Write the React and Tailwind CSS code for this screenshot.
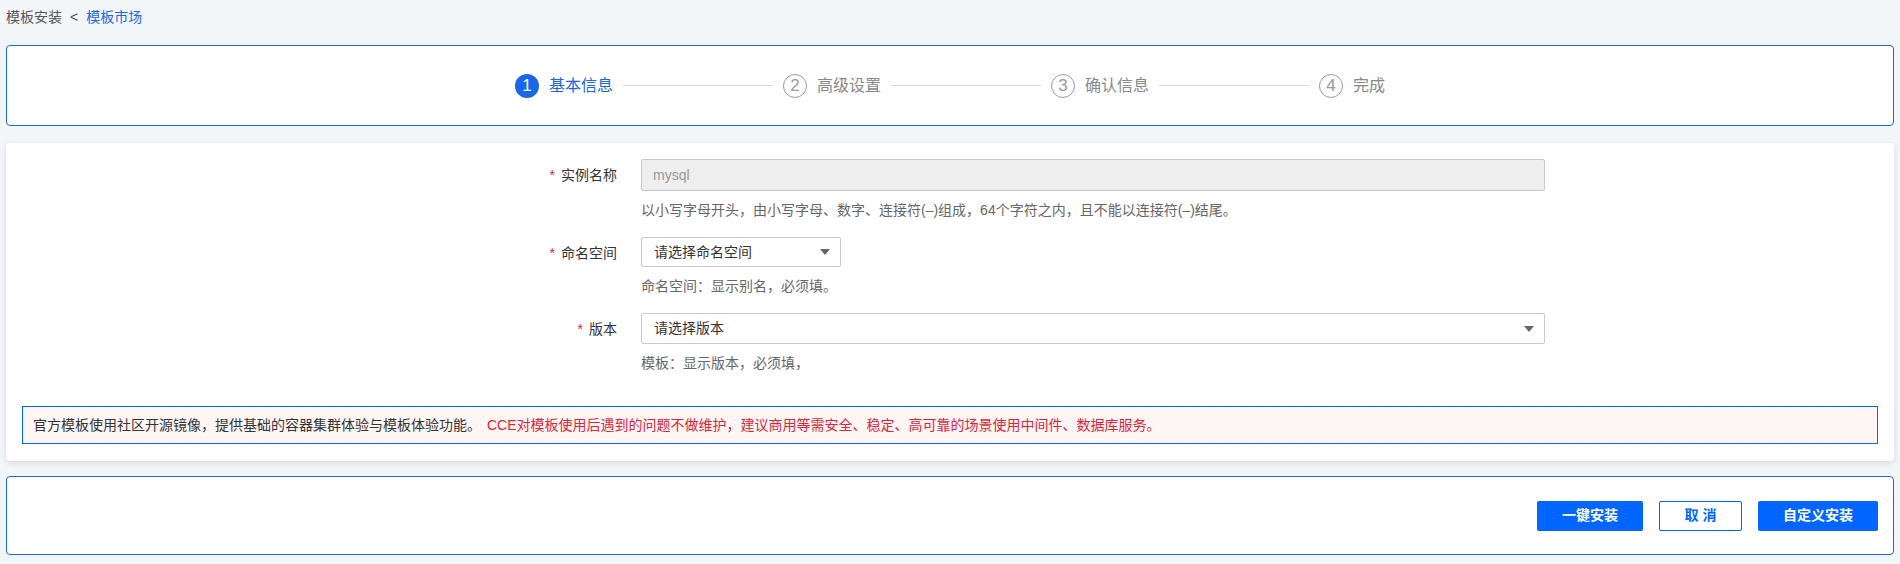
import React from "react";

const steps = ["基本信息", "高级设置", "确认信息", "完成"];

function Steps() {
  return (
    <div className="flex items-center justify-center h-full">
      {steps.map((s, i) => (
        <div key={s} className="flex items-center">
          {i > 0 && <div className="w-[150px] h-px bg-[#d9d9d9] mx-[10px]" />}
          {i === 0 ? (
            <span className="w-[24px] h-[24px] rounded-full bg-[#1a66e8] text-white text-[17px] flex items-center justify-center">
              1
            </span>
          ) : (
            <span className="w-[24px] h-[24px] rounded-full border border-[#999] text-[#999] text-[17px] flex items-center justify-center">
              {i + 1}
            </span>
          )}
          <span
            className={
              i === 0
                ? "ml-[10px] text-[16px] text-[#1a66e8]"
                : "ml-[10px] text-[16px] text-[#888]"
            }
          >
            {s}
          </span>
        </div>
      ))}
    </div>
  );
}

function Caret() {
  return (
    <svg width="10" height="6" viewBox="0 0 10 6">
      <path d="M0 0 L10 0 L5 6 Z" fill="#666" />
    </svg>
  );
}

function Row({ label, children, hint }) {
  return (
    <div className="flex">
      <div className="w-[635px] pr-[24px] flex justify-end items-start">
        <div className="h-[32px] flex items-center text-[14px] text-[#333]">
          <span className="text-[#e0243a] mr-[6px]">*</span>
          {label}
        </div>
      </div>
      <div>
        {children}
        <div className="text-[14px] text-[#666] mt-[10px] leading-[18px]">{hint}</div>
      </div>
    </div>
  );
}

export default function App() {
  return (
    <div
      className="min-h-screen bg-[#f3f6f9] px-[6px] pb-[9px]"
      style={{ fontFamily: '"Liberation Sans", "Noto Sans CJK SC", sans-serif' }}
    >
      {/* breadcrumb */}
      <div className="h-[45px] flex items-center pb-[10px] text-[14px]">
        <span className="text-[#555]">模板安装</span>
        <span className="text-[#555] mx-[8px]">&lt;</span>
        <span className="text-[#1a66e8]">模板市场</span>
      </div>

      {/* steps */}
      <div className="h-[81px] bg-white border border-[#1a66e8] rounded-[4px]">
        <Steps />
      </div>

      {/* form */}
      <div className="mt-[17px] h-[318px] bg-white rounded-[4px] shadow-[0_2px_6px_rgba(0,0,0,0.12)] pt-[16px] px-[16px]">
        <div className="-ml-[16px] flex flex-col gap-[18px]">
          <Row
            label="实例名称"
            hint="以小写字母开头，由小写字母、数字、连接符(–)组成，64个字符之内，且不能以连接符(–)结尾。"
          >
            <div className="w-[904px] h-[32px] bg-[#eeeeee] border border-[#c8c8c8] rounded-[2px] px-[11px] flex items-center text-[14px] text-[#999]">
              mysql
            </div>
          </Row>
          <Row label="命名空间" hint="命名空间：显示别名，必须填。">
            <div className="w-[200px] h-[30px] bg-white border border-[#c8c8c8] rounded-[2px] pl-[12px] pr-[10px] flex items-center justify-between text-[14px] text-[#333]">
              请选择命名空间
              <Caret />
            </div>
          </Row>
          <Row label="版本" hint="模板：显示版本，必须填，">
            <div className="w-[904px] h-[31px] bg-white border border-[#c8c8c8] rounded-[2px] pl-[12px] pr-[10px] flex items-center justify-between text-[14px] text-[#333]">
              请选择版本
              <Caret />
            </div>
          </Row>
        </div>
        <div className="mt-[34px] h-[38px] border border-[#0066ff] bg-[#fef6f4] flex items-center px-[10px] text-[14px]">
          <span className="text-[#333]">官方模板使用社区开源镜像，提供基础的容器集群体验与模板体验功能。</span>
          <span className="text-[#e0243a] ml-[6px]">
            CCE对模板使用后遇到的问题不做维护，建议商用等需安全、稳定、高可靠的场景使用中间件、数据库服务。
          </span>
        </div>
      </div>

      {/* actions */}
      <div className="mt-[15px] h-[79px] bg-white border border-[#1a66e8] rounded-[4px] flex items-center justify-end gap-[16px] pr-[15px]">
        <button className="w-[106px] h-[30px] bg-[#0066ff] text-white text-[14px] font-bold rounded-[2px]">
          一键安装
        </button>
        <button className="w-[83px] h-[30px] bg-white border border-[#0066ff] text-[#0066ff] text-[14px] font-bold rounded-[2px]">
          取 消
        </button>
        <button className="w-[120px] h-[30px] bg-[#0066ff] text-white text-[14px] font-bold rounded-[2px]">
          自定义安装
        </button>
      </div>
    </div>
  );
}
